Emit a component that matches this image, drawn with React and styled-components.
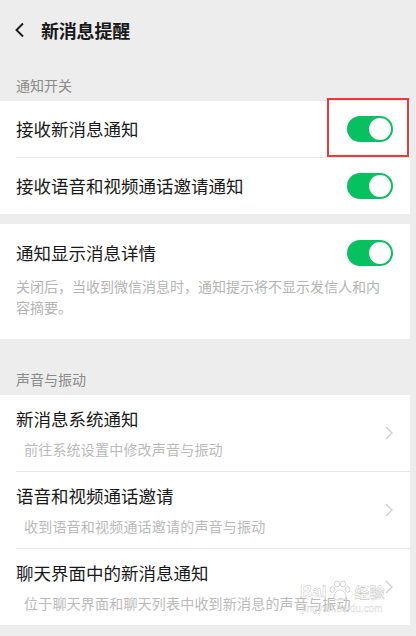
import styled, { createGlobalStyle } from "styled-components";

const GlobalStyle = createGlobalStyle`
  html, body {
    margin: 0;
    background: #ededed;
  }
  body {
    font-family: "Noto Sans CJK SC", "Noto Sans", sans-serif;
    -webkit-font-smoothing: antialiased;
  }
`;

const switchRows = [{ title: "接收新消息通知" }, { title: "接收语音和视频通话邀请通知" }];

const linkRows = [
  { title: "新消息系统通知", sub: "前往系统设置中修改声音与振动" },
  { title: "语音和视频通话邀请", sub: "收到语音和视频通话邀请的声音与振动" },
  { title: "聊天界面中的新消息通知", sub: "位于聊天界面和聊天列表中收到新消息的声音与振动" },
];

function BackIcon() {
  return (
    <svg width="11" height="16" viewBox="0 0 11 16">
      <path d="M9 1.5 L2.5 8 L9 14.5" fill="none" stroke="#1a1a1a" strokeWidth="1.9" />
    </svg>
  );
}

function Chevron() {
  return (
    <svg width="8" height="14" viewBox="0 0 8 14">
      <path d="M1 1 L7 7 L1 13" fill="none" stroke="#cdcdcd" strokeWidth="1.2" />
    </svg>
  );
}

function Paw() {
  return (
    <svg width="22" height="22" viewBox="0 0 22 22">
      <g fill="rgba(255,255,255,0.5)" stroke="rgba(170,170,170,0.55)" strokeWidth="0.9">
        <ellipse cx="8" cy="4" rx="2.6" ry="3" />
        <ellipse cx="14" cy="4" rx="2.6" ry="3" />
        <ellipse cx="3.5" cy="9.5" rx="2.4" ry="2.8" />
        <ellipse cx="18.5" cy="9.5" rx="2.4" ry="2.8" />
        <path d="M11 10 C7 10 4.5 15 5 18 C5.5 20.5 9 20 11 19.5 C13 20 16.5 20.5 17 18 C17.5 15 15 10 11 10 Z" />
      </g>
    </svg>
  );
}

function App() {
  return (
    <Page>
      <GlobalStyle />
      <Header>
        <BackIcon />
        <Title>新消息提醒</Title>
      </Header>

      <SectionLabel $top={15}>通知开关</SectionLabel>
      <Card>
        {switchRows.map((r, i) => (
          <div key={r.title}>
            {i > 0 && <Divider />}
            <SwitchRow>
              <RowTitle>{r.title}</RowTitle>
              <Toggle $on />
            </SwitchRow>
          </div>
        ))}
      </Card>

      <Card $gap={10}>
        <DetailBlock>
          <DetailHead>
            <RowTitle>通知显示消息详情</RowTitle>
            <Toggle $on />
          </DetailHead>
          <Desc>关闭后，当收到微信消息时，通知提示将不显示发信人和内容摘要。</Desc>
        </DetailBlock>
      </Card>

      <SectionLabel $top={30}>声音与振动</SectionLabel>
      <Card>
        {linkRows.map((r, i) => (
          <div key={r.title}>
            {i > 0 && <Divider />}
            <LinkRow>
              <LinkText>
                <RowTitle>{r.title}</RowTitle>
                <Sub>{r.sub}</Sub>
              </LinkText>
              <Chevron />
            </LinkRow>
          </div>
        ))}
      </Card>

      <Highlight />

      <Watermark>
        <MarkLine>
          <MarkLogo>Bai</MarkLogo>
          <Paw />
          <MarkLogo $cjk>经验</MarkLogo>
        </MarkLine>
        <MarkUrl>jingyan.baidu.com</MarkUrl>
      </Watermark>
    </Page>
  );
}

export default App;

const Page = styled.div`
  position: relative;
  width: 410px;
  min-height: 636px;
  background: #ededed;
`;

const Header = styled.div`
  height: 60px;
  display: flex;
  align-items: center;
  padding-left: 14px;
  box-sizing: border-box;
`;

const Title = styled.div`
  margin-left: 16px;
  font-size: 18px;
  font-weight: 700;
  color: #191919;
  letter-spacing: -0.2px;
`;

const SectionLabel = styled.div`
  padding: ${(p) => p.$top}px 16px 6px;
  font-size: 14px;
  line-height: 20px;
  color: #8a8a8a;
`;

const Card = styled.div`
  background: #fff;
  margin-top: ${(p) => p.$gap || 0}px;
`;

const Divider = styled.div`
  height: 1px;
  margin-left: 16px;
  background: #e8e8e8;
`;

const SwitchRow = styled.div`
  height: 56px;
  display: flex;
  align-items: center;
  justify-content: space-between;
  padding: 0 17px 0 16px;
`;

const RowTitle = styled.div`
  font-size: 17.5px;
  line-height: 24px;
  color: #191919;
`;

const Toggle = styled.div`
  position: relative;
  width: 46px;
  height: 26px;
  border-radius: 13px;
  background: ${(p) => (p.$on ? "#07c160" : "#e5e5e5")};
  flex-shrink: 0;

  &::after {
    content: "";
    position: absolute;
    top: 2px;
    left: ${(p) => (p.$on ? "22px" : "2px")};
    width: 22px;
    height: 22px;
    border-radius: 50%;
    background: #fff;
  }
`;

const DetailBlock = styled.div`
  padding: 16px 17px 21px 16px;
`;

const DetailHead = styled.div`
  display: flex;
  align-items: center;
  justify-content: space-between;
`;

const Desc = styled.div`
  margin-top: 10px;
  max-width: 368px;
  font-size: 14px;
  line-height: 21px;
  color: #b4b4b4;
`;

const LinkRow = styled.div`
  height: 76px;
  display: flex;
  align-items: center;
  justify-content: space-between;
  padding: 12px 17px 12px 16px;
  box-sizing: border-box;
`;

const LinkText = styled.div`
  display: flex;
  flex-direction: column;
  gap: 8px;
`;

const Sub = styled.div`
  margin-left: 8px;
  font-size: 14px;
  line-height: 20px;
  letter-spacing: 0.2px;
  color: #bababa;
`;

const Highlight = styled.div`
  position: absolute;
  left: 327px;
  top: 98px;
  width: 82px;
  height: 59px;
  box-sizing: border-box;
  border: 2px solid #f03838;
`;

const Watermark = styled.div`
  position: absolute;
  left: 300px;
  top: 580px;
  display: flex;
  flex-direction: column;
  align-items: center;
  pointer-events: none;
`;

const MarkLine = styled.div`
  display: flex;
  align-items: flex-end;
  gap: 3px;
`;

const MarkLogo = styled.span`
  font-family: ${(p) => (p.$cjk ? `"Noto Sans CJK SC", sans-serif` : `"Liberation Sans", sans-serif`)};
  font-size: ${(p) => (p.$cjk ? "15px" : "17px")};
  font-weight: 700;
  line-height: 20px;
  color: rgba(255, 255, 255, 0.55);
  -webkit-text-stroke: 0.6px rgba(160, 160, 160, 0.55);
`;

const MarkUrl = styled.div`
  margin-top: 1px;
  font-family: "Liberation Sans", sans-serif;
  font-size: 10px;
  line-height: 11px;
  color: rgba(255, 255, 255, 0.6);
  -webkit-text-stroke: 0.4px rgba(170, 170, 170, 0.5);
`;
